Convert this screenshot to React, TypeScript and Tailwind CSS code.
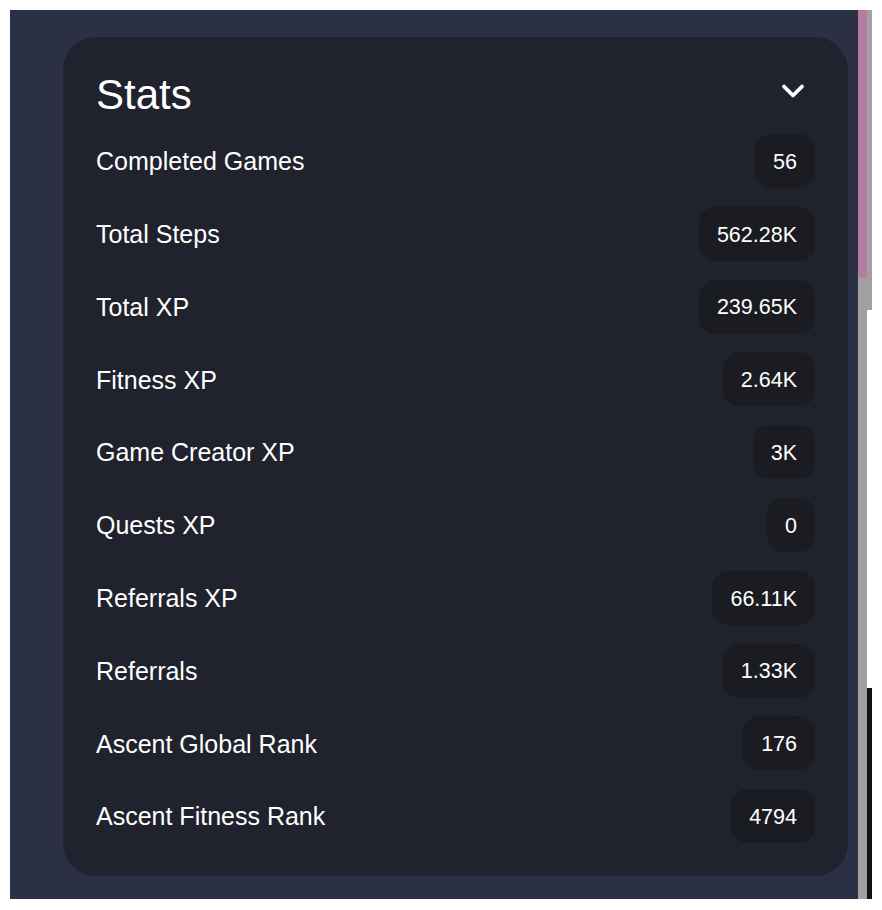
import { ChevronDown } from "lucide-react"

interface Stat {
  label: string
  value: string
}

const stats: Stat[] = [
  { label: "Completed Games", value: "56" },
  { label: "Total Steps", value: "562.28K" },
  { label: "Total XP", value: "239.65K" },
  { label: "Fitness XP", value: "2.64K" },
  { label: "Game Creator XP", value: "3K" },
  { label: "Quests XP", value: "0" },
  { label: "Referrals XP", value: "66.11K" },
  { label: "Referrals", value: "1.33K" },
  { label: "Ascent Global Rank", value: "176" },
  { label: "Ascent Fitness Rank", value: "4794" },
]

const App = () => {
  return (
    <div className="w-[882px] h-[910px] bg-white pt-[10px] pl-[10px] flex font-['Liberation_Sans',Arial,sans-serif]">
      <div className="w-[848px] h-[889px] bg-[#2c3044] pt-[27px] pl-[53px]">
        <section className="w-[785px] h-[839px] rounded-[33px] bg-[#20222d] p-[33px] text-white">
          <div className="flex justify-between h-[48px] mb-[16px]">
            <h2 className="text-[42px] leading-[48px] pt-[1px]">Stats</h2>
            <button className="w-9 h-9 mt-[3px] mr-[4px] text-white">
              <ChevronDown size={36} strokeWidth={2.5} />
            </button>
          </div>

          <ul className="flex flex-col gap-[18.8px]">
            {stats.map((stat) => (
              <li
                key={stat.label}
                className="flex justify-between items-center h-[54px]"
              >
                <span className="text-[25px] pt-[2px]">{stat.label}</span>
                <span className="h-[54px] px-[18px] pt-[2px] rounded-[16px] bg-[#1b1c22] text-[21.5px] flex items-center">
                  {stat.value}
                </span>
              </li>
            ))}
          </ul>
        </section>
      </div>

      {/* scrollbar */}
      <div className="w-[14px] h-[889px] flex">
        <div className="w-[9px] h-full bg-[#a0a0a0]">
          <div className="w-full h-[268px] bg-[#b57ba1] rounded-b-[4px]"></div>
        </div>
        <div className="w-[5px] h-full flex flex-col">
          <div className="h-[300px] bg-[#a0a0a0]"></div>
          <div className="flex-1 bg-white"></div>
          <div className="h-[211px] bg-[#111111]"></div>
        </div>
      </div>
    </div>
  )
}

export default App
